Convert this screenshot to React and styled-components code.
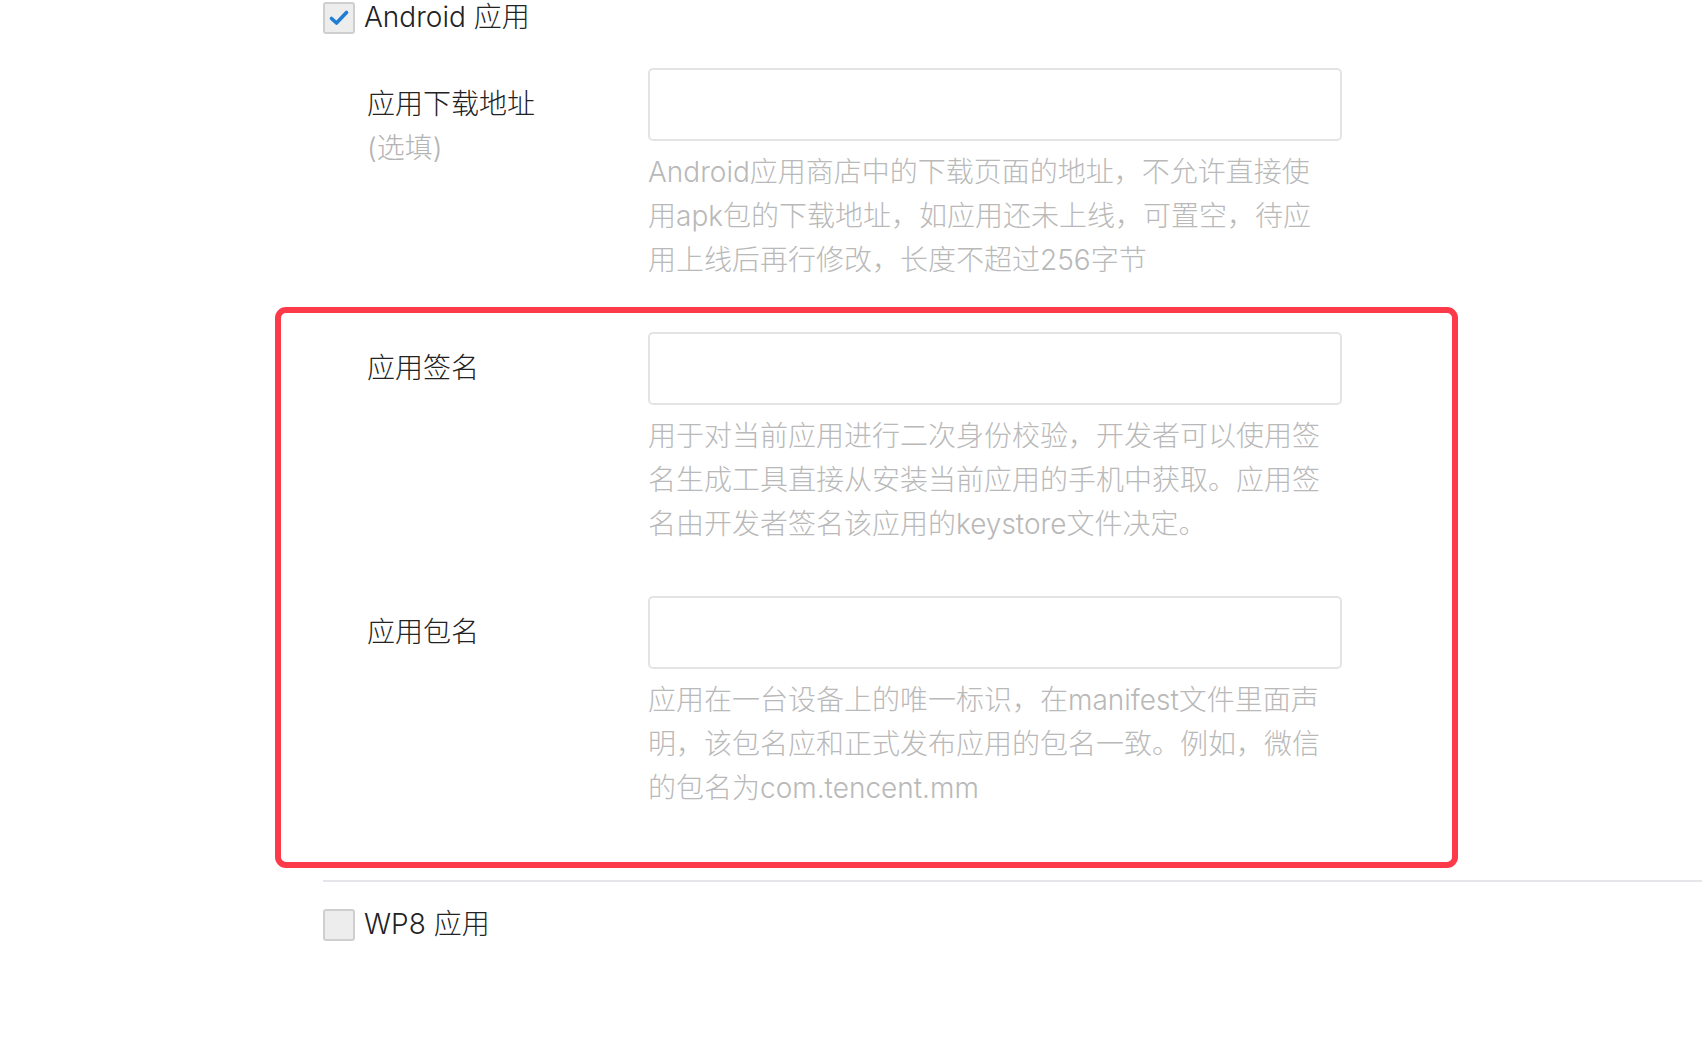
import React from "react";
import styled, { createGlobalStyle } from "styled-components";

const GlobalStyle = createGlobalStyle`
  body {
    margin: 0;
    background: #fff;
    font-family: Inter, "Noto Sans CJK SC", sans-serif;
    color: #222;
  }
`;

const fields = [
  {
    label: "应用签名",
    help: "用于对当前应用进行二次身份校验，开发者可以使用签名生成工具直接从安装当前应用的手机中获取。应用签名由开发者签名该应用的keystore文件决定。",
  },
  {
    label: "应用包名",
    help: "应用在一台设备上的唯一标识，在manifest文件里面声明，该包名应和正式发布应用的包名一致。例如，微信的包名为com.tencent.mm",
  },
];

function Check({ checked, children }) {
  return (
    <CheckRow>
      <Box>
        {checked && (
          <svg width="22" height="22" viewBox="0 0 22 22">
            <path
              d="M3.5 11.5 L8.5 16 L18.5 5.5"
              fill="none"
              stroke="#1f7dd4"
              strokeWidth="3.6"
              strokeLinecap="round"
              strokeLinejoin="round"
            />
          </svg>
        )}
      </Box>
      <CheckText>{children}</CheckText>
    </CheckRow>
  );
}

function Field({ label, sub, help }) {
  return (
    <Row>
      <Label>
        {label}
        {sub && <Sub>{sub}</Sub>}
      </Label>
      <div>
        <Input type="text" />
        <Help>{help}</Help>
      </div>
    </Row>
  );
}

function App() {
  return (
    <>
      <GlobalStyle />
      <Page>
        <Check checked>Android 应用</Check>
        <Fields>
          <Field
            label="应用下载地址"
            sub="(选填)"
            help="Android应用商店中的下载页面的地址，不允许直接使用apk包的下载地址，如应用还未上线，可置空，待应用上线后再行修改，长度不超过256字节"
          />
          <Highlight>
            {fields.map((f) => (
              <Field key={f.label} label={f.label} help={f.help} />
            ))}
          </Highlight>
        </Fields>
        <Divider />
        <Check>WP8 应用</Check>
      </Page>
    </>
  );
}

export default App;

const Page = styled.div`
  margin-left: 323px;
  padding-top: 1px;
  padding-bottom: 80px;
`;

const CheckRow = styled.label`
  display: flex;
  align-items: center;
  gap: 9px;
  height: 33px;
  font-size: 28px;
  font-weight: 300;
  color: #222;
`;

const CheckText = styled.span`
  padding-bottom: 5px;
`;

const Box = styled.span`
  box-sizing: border-box;
  width: 32px;
  height: 32px;
  border: 2px solid #cfcfcf;
  border-radius: 3px;
  background: #ededed;
  display: flex;
  align-items: center;
  justify-content: center;
`;

const Fields = styled.div`
  display: flex;
  flex-direction: column;
  align-items: flex-start;
  gap: 50px;
  margin-top: 34px;
  padding-left: 44px;
`;

const Highlight = styled.div`
  position: relative;
  display: flex;
  flex-direction: column;
  gap: 50px;

  &::after {
    content: "";
    position: absolute;
    top: -25px;
    bottom: -58px;
    left: -92px;
    right: -116px;
    border: 6px solid #fc3a4a;
    border-radius: 11px;
    pointer-events: none;
  }
`;

const Row = styled.div`
  display: grid;
  grid-template-columns: 281px 694px;
  width: 975px;
`;

const Label = styled.div`
  padding-top: 16px;
  font-size: 28px;
  font-weight: 300;
  line-height: 40px;
  color: #222;
`;

const Sub = styled.div`
  line-height: 48px;
  color: #b4b4b4;
`;

const Input = styled.input`
  display: block;
  box-sizing: border-box;
  width: 694px;
  height: 73px;
  border: 2px solid #e4e4e4;
  border-radius: 5px;
  background: #fff;
  outline: none;
  font-size: 28px;
  padding: 0 16px;
`;

const Help = styled.p`
  width: 680px;
  margin: 9px 0 0;
  font-size: 28px;
  font-weight: 300;
  line-height: 44px;
  color: #b9b9b9;
`;

const Divider = styled.div`
  height: 2px;
  background: #e5e5ea;
  margin-top: 70px;
  margin-bottom: 26px;
`;
